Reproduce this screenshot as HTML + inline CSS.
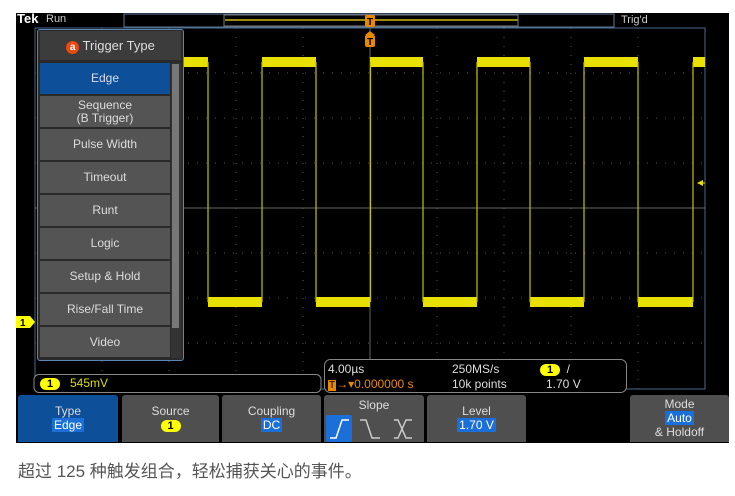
<!DOCTYPE html>
<html><head><meta charset="utf-8"><style>
*{margin:0;padding:0;box-sizing:border-box}
body{width:735px;height:496px;background:#fff;position:relative;overflow:hidden;font-family:"Liberation Sans",sans-serif}
.a{position:absolute}
.scr{left:16px;top:13px;width:713px;height:430px;background:#000}
.mi{position:absolute;left:40px;width:130px;height:31px;background:#545454;color:#ddd;font-size:12px;text-align:center;display:flex;align-items:center;justify-content:center;line-height:13px}
.btn{position:absolute;top:395px;height:47px;background:#4f4f4f;color:#ddd;font-size:12px;text-align:center;line-height:14px;border-radius:3px 3px 0 0;padding-top:9px}
.hl{background:#1a6fd8;color:#fff;padding:0 2px}
.c1{display:inline-block;background:#ff0;color:#000;border-radius:7px;width:20px;height:12px;line-height:12px;font-size:11px;text-align:center;font-weight:bold}
</style></head><body>
<div class="a scr"></div>
<svg class="a" style="left:0;top:0" width="735" height="496">
 <!-- top bar -->
 <text x="17" y="23" fill="#fff" font-size="13" font-weight="bold" font-family="Liberation Sans">Tek</text>
 <text x="46" y="22" fill="#ccc" font-size="11" font-family="Liberation Sans">Run</text>
 <rect x="124" y="14" width="490" height="13" fill="none" stroke="#5a7a9a"/>
 <rect x="224" y="15" width="294" height="11" fill="none" stroke="#777"/>
 <line x1="225" y1="20" x2="518" y2="20" stroke="#9a8a10" stroke-width="2"/>
 <text x="621" y="23" fill="#ccc" font-size="11" font-family="Liberation Sans">Trig'd</text>
 <!-- graticule -->
 <rect x="35" y="28" width="670" height="361" fill="none" stroke="#4a6a8a"/>
 <g stroke="#555" stroke-dasharray="1 8">
  <line x1="102" y1="28" x2="102" y2="389"/><line x1="169" y1="28" x2="169" y2="389"/><line x1="236" y1="28" x2="236" y2="389"/><line x1="303" y1="28" x2="303" y2="389"/><line x1="437" y1="28" x2="437" y2="389"/><line x1="504" y1="28" x2="504" y2="389"/><line x1="571" y1="28" x2="571" y2="389"/><line x1="638" y1="28" x2="638" y2="389"/>
  <line x1="35" y1="73" x2="705" y2="73"/><line x1="35" y1="118" x2="705" y2="118"/><line x1="35" y1="163" x2="705" y2="163"/><line x1="35" y1="253" x2="705" y2="253"/><line x1="35" y1="298" x2="705" y2="298"/><line x1="35" y1="343" x2="705" y2="343"/>
 </g>
 <line x1="35" y1="208" x2="705" y2="208" stroke="#666"/>
 <line x1="370" y1="28" x2="370" y2="389" stroke="#666"/>
 <!-- waveform -->
 <g fill="#e8e000">
  <rect x="183" y="57" width="25" height="10"/><rect x="262" y="57" width="54" height="10"/><rect x="370" y="57" width="53" height="10"/><rect x="477" y="57" width="53" height="10"/><rect x="584" y="57" width="54" height="10"/><rect x="693" y="57" width="12" height="10"/>
  <rect x="208" y="297" width="54" height="10"/><rect x="316" y="297" width="54" height="10"/><rect x="423" y="297" width="54" height="10"/><rect x="530" y="297" width="54" height="10"/><rect x="638" y="297" width="55" height="10"/>
 </g>
 <g stroke="#c8c000" stroke-width="1.2">
  <line x1="208" y1="62" x2="208" y2="302"/><line x1="262" y1="62" x2="262" y2="302"/><line x1="316" y1="62" x2="316" y2="302"/><line x1="370.5" y1="62" x2="370.5" y2="302"/><line x1="423" y1="62" x2="423" y2="302"/><line x1="477" y1="62" x2="477" y2="302"/><line x1="530" y1="62" x2="530" y2="302"/><line x1="584" y1="62" x2="584" y2="302"/><line x1="638" y1="62" x2="638" y2="302"/><line x1="693" y1="62" x2="693" y2="302"/>
 </g>
 <!-- trigger markers -->
 <rect x="365" y="15" width="10" height="12" rx="2" fill="#e88a00"/>
 <text x="367" y="25" fill="#000" font-size="10" font-weight="bold">T</text>
 <rect x="365" y="35" width="10" height="12" rx="2" fill="#e88a00"/>
 <polygon points="365,35 375,35 370,31" fill="#e88a00"/>
 <text x="367" y="45" fill="#000" font-size="10" font-weight="bold">T</text>
 <polygon points="697,183 703,180 703,186" fill="#e8e000"/><line x1="700" y1="183" x2="705" y2="183" stroke="#e8e000"/>
 <polygon points="16,316 30,316 35,322 30,328 16,328" fill="#ff0"/>
 <text x="20" y="326" fill="#000" font-size="10" font-weight="bold">1</text>
 <!-- info boxes -->
 <rect x="34" y="374.5" width="287" height="18" rx="5" fill="#000" stroke="#888"/>
 <rect x="324.5" y="359.5" width="302" height="33" rx="6" fill="#000" stroke="#888"/>
</svg>
<!-- menu -->
<div class="a" style="left:37px;top:29px;width:147px;height:332px;background:#2a2a2a;border:1px solid #5a85b5;border-radius:3px"></div>
<div class="a" style="left:40px;top:31px;width:141px;height:29px;background:#3c3c3c;color:#ddd;font-size:13px;text-align:center;line-height:29px"><span style="display:inline-block;width:13px;height:13px;border-radius:7px;background:#e84a10;color:#fff;font-size:10px;line-height:13px;font-weight:bold">a</span> Trigger Type</div>
<div class="a" style="left:171px;top:63px;width:10px;height:295px;background:#333"></div>
<div class="a" style="left:172px;top:64px;width:7px;height:264px;background:#777"></div>
<div class="mi" style="top:63px;background:#0d4f98;color:#dde">Edge</div>
<div class="mi" style="top:96px">Sequence<br>(B Trigger)</div>
<div class="mi" style="top:129px">Pulse Width</div>
<div class="mi" style="top:162px">Timeout</div>
<div class="mi" style="top:195px">Runt</div>
<div class="mi" style="top:228px">Logic</div>
<div class="mi" style="top:261px">Setup &amp; Hold</div>
<div class="mi" style="top:294px">Rise/Fall Time</div>
<div class="mi" style="top:327px;height:30px">Video</div>
<!-- info text -->
<div class="a" style="left:40px;top:376px;font-size:12px;color:#dd0"><span class="c1">1</span>&nbsp;&nbsp;&nbsp;545mV</div>
<div class="a" style="left:328px;top:362px;font-size:12px;color:#ddd">4.00µs</div>
<div class="a" style="left:328px;top:377px;font-size:12px;color:#e88a00"><span style="background:#e88a00;color:#000;font-size:10px;padding:0 1px">T</span>→▾0.000000 s</div>
<div class="a" style="left:452px;top:362px;font-size:12px;color:#ddd">250MS/s</div>
<div class="a" style="left:452px;top:377px;font-size:12px;color:#ddd">10k points</div>
<div class="a" style="left:540px;top:362px;font-size:12px;color:#ddd"><span class="c1">1</span>&nbsp;&nbsp;/</div>
<div class="a" style="left:546px;top:377px;font-size:12px;color:#ddd">1.70 V</div>
<!-- buttons -->
<div class="btn" style="left:18px;width:100px;background:#0d4f98">Type<br><span class="hl">Edge</span></div>
<div class="btn" style="left:122px;width:97px">Source<br><span class="c1" style="margin-top:2px">1</span></div>
<div class="btn" style="left:222px;width:99px">Coupling<br><span class="hl">DC</span></div>
<div class="btn" style="left:324px;width:100px;padding-top:3px">Slope</div>
<svg class="a" style="left:324px;top:414px" width="100" height="28">
 <rect x="2" y="1" width="26" height="27" rx="2" fill="#1a6fd8"/>
 <path d="M6 24 H12 L18 6 H25" stroke="#fff" stroke-width="1.5" fill="none"/>
 <path d="M36 6 H42 L48 24 H56" stroke="#ccc" stroke-width="1.5" fill="none"/>
 <path d="M70 6 H74 L82 24 H88 M70 24 H74 L82 6 H88" stroke="#ccc" stroke-width="1.5" fill="none"/>
</svg>
<div class="btn" style="left:427px;width:99px">Level<br><span class="hl">1.70 V</span></div>
<div class="btn" style="left:630px;width:99px;padding-top:2px">Mode<br><span class="hl">Auto</span><br>&amp; Holdoff</div>
<div class="a" style="left:18px;top:457px;font-size:17px;color:#555;font-family:'Liberation Sans','Noto Sans CJK SC',sans-serif">超过 125 种触发组合，轻松捕获关心的事件。</div>
</body></html>
